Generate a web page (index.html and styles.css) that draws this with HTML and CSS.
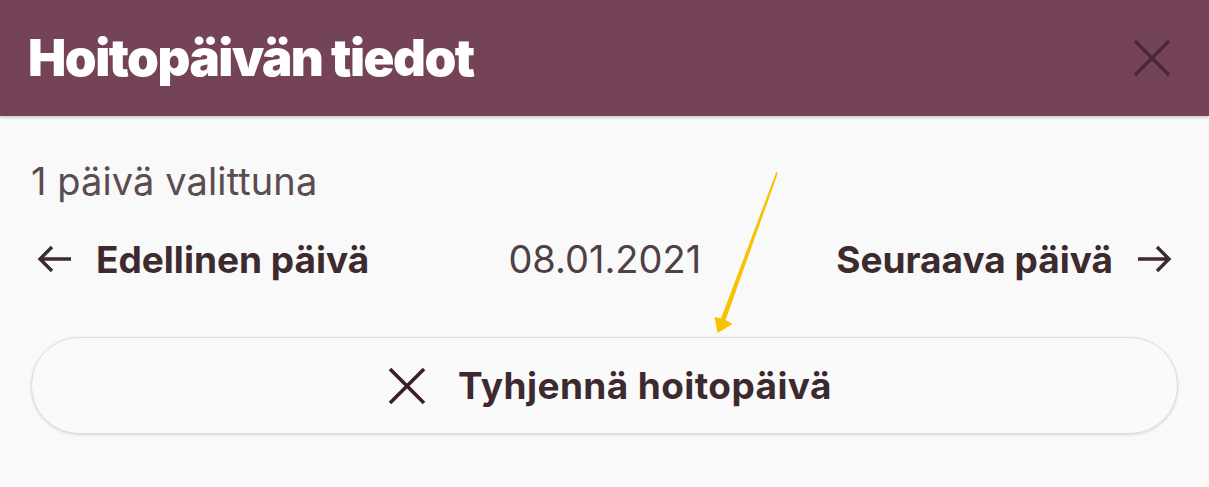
FILE: index.html
```html
<!DOCTYPE html>
<html lang="fi">
<head>
<meta charset="utf-8">
<title>Hoitopäivän tiedot</title>
<link rel="stylesheet" href="styles.css">
</head>
<body>
<header class="header">
  <h1 class="title">Hoitopäivän tiedot</h1>
  <button class="close" aria-label="Sulje">
    <svg width="40" height="40" viewBox="0 0 40 40"><path d="M3 3L37 37M37 3L3 37" stroke="currentColor" stroke-width="3.6" fill="none"/></svg>
  </button>
</header>
<main class="content">
  <p class="selected">1 päivä valittuna</p>
  <div class="nav">
    <a class="nav-link">
      <svg class="arrow" width="36" height="30" viewBox="0 0 36 30"><path d="M34 15H3M15 3L3 15L15 27" stroke="currentColor" stroke-width="3.4" fill="none" stroke-linejoin="miter"/></svg>
      <span>Edellinen päivä</span>
    </a>
    <span class="date">08.01.2021</span>
    <a class="nav-link">
      <span>Seuraava päivä</span>
      <svg class="arrow" width="36" height="30" viewBox="0 0 36 30"><path d="M2 15H33M21 3L33 15L21 27" stroke="currentColor" stroke-width="3.4" fill="none"/></svg>
    </a>
  </div>
  <button class="clear">
    <svg width="40" height="40" viewBox="0 0 40 40"><path d="M3 3L37 37M37 3L3 37" stroke="currentColor" stroke-width="3.6" fill="none"/></svg>
    <span>Tyhjennä hoitopäivä</span>
  </button>
</main>
<svg class="annotation" width="1209" height="487" viewBox="0 0 1209 487">
  <polygon points="776.3,172 777.7,173.5 725.6,320 732.5,324 717.5,333 714.5,317 721,318.6" fill="#f7c200"/>
</svg>
</body>
</html>
```

FILE: styles.css
```css
* { box-sizing: border-box; }
html, body { margin: 0; padding: 0; }
body {
  width: 1209px;
  height: 487px;
  background: #f9f9f9;
  font-family: Inter, "Noto Sans", sans-serif;
  color: #3c2a2e;
  position: relative;
  overflow: hidden;
}
.header {
  height: 116px;
  background: #744357;
  display: flex;
  align-items: center;
  justify-content: space-between;
  padding: 0 37px 0 28px;
  box-shadow: 0 1px 3px rgba(0,0,0,0.25);
}
.title {
  margin: 0;
  color: #ffffff;
  font-family: Inter, sans-serif;
  font-weight: 900;
  font-size: 51px;
  letter-spacing: -1.5px;
  padding-bottom: 2px;
}
.close {
  background: none;
  border: 0;
  padding: 0;
  color: #4b2737;
  display: flex;
}
.content {
  padding: 0 31px;
}
.selected {
  margin: 0;
  padding-top: 43px;
  font-size: 38px;
  line-height: 44px;
  color: #5a4c50;
  letter-spacing: 0.1px;
}
.nav {
  display: flex;
  align-items: center;
  justify-content: space-between;
  margin-top: 34px;
  padding: 0 6px 0 6px;
  height: 44px;
}
.nav-link {
  display: flex;
  align-items: center;
  gap: 23px;
  font-weight: 700;
  font-size: 37px;
  color: #3c2a2e;
}
.arrow { color: #3c2a2e; }
.date {
  font-size: 38px;
  color: #4e4044;
  margin-left: 4px;
}
.clear {
  margin-top: 56px;
  width: 100%;
  height: 97px;
  border: 1.5px solid #dcdcdc;
  border-radius: 48px;
  background: #fafafa;
  box-shadow: 0 1px 3px rgba(0,0,0,0.12);
  display: flex;
  align-items: center;
  justify-content: center;
  gap: 31px;
  font-family: Inter, sans-serif;
  font-weight: 700;
  font-size: 37px;
  letter-spacing: 0.4px;
  color: #3c2a2e;
  padding: 0 0 0 10px;
}
.clear svg { color: #3a2024; }
.annotation {
  position: absolute;
  left: 0;
  top: 0;
  pointer-events: none;
}
```
